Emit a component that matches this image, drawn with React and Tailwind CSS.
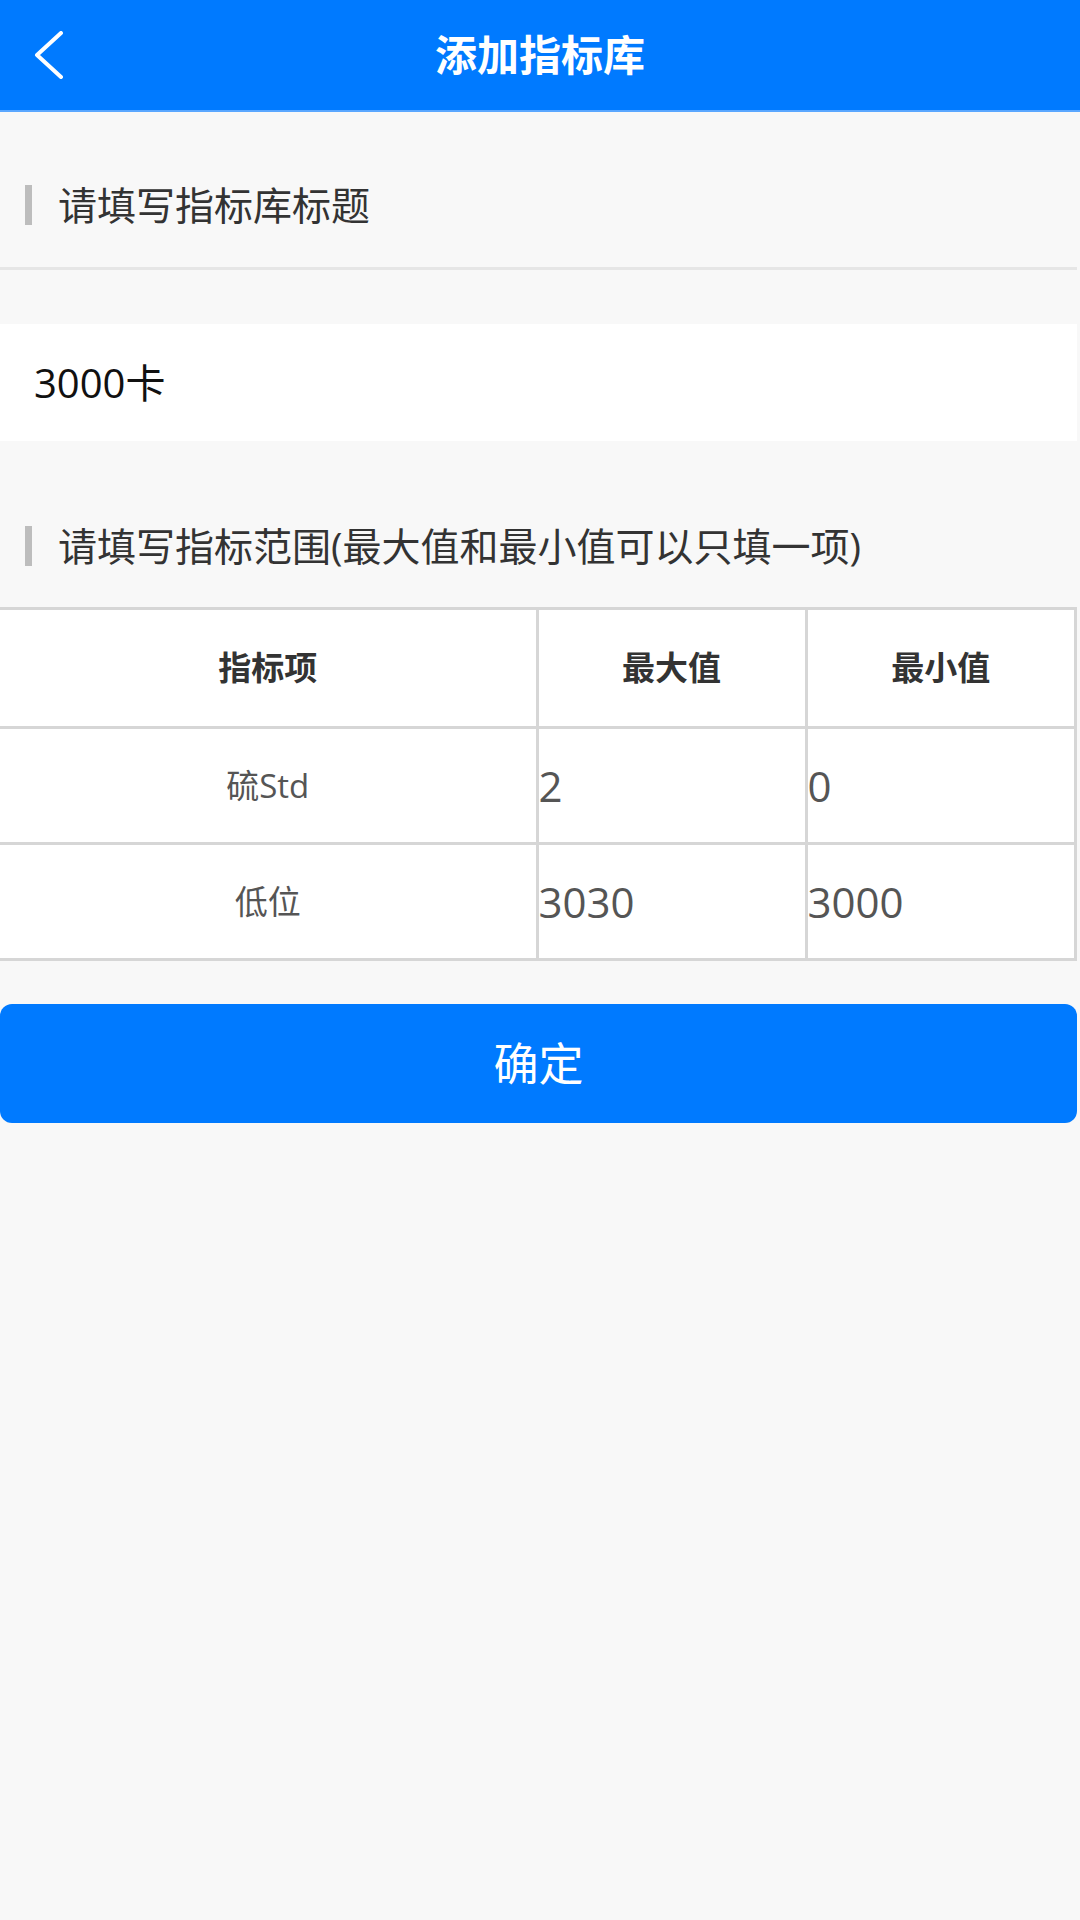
const font = { fontFamily: '"Open Sans", "Noto Sans CJK SC", sans-serif' };

const rows = [
  { name: "硫Std", max: "2", min: "0" },
  { name: "低位", max: "3030", min: "3000" },
];

const SectionLabel = ({ children }) => (
  <div className="flex items-center gap-[26px] pl-[25px]">
    <span className="block w-[7px] h-[40px] bg-[#bdbdbd]" />
    <span className="text-[39px] leading-[40px] text-[#333]">{children}</span>
  </div>
);

const App = () => {
  return (
    <div className="w-[1080px] min-h-[1920px] bg-[#f8f8f8]" style={font}>
      <header className="grid grid-cols-[1fr_auto_1fr] items-center h-[112px] bg-[#007aff] border-b-2 border-[#5aa7ff]">
        <button className="pl-[33px] h-full flex items-center">
          <svg width="32" height="48" viewBox="0 0 32 48" fill="none">
            <polyline
              points="28,2 4,24 28,46"
              stroke="white"
              strokeWidth="4"
              strokeLinecap="round"
              strokeLinejoin="round"
            />
          </svg>
        </button>
        <h1 className="text-[42px] font-bold text-white leading-none">添加指标库</h1>
        <div />
      </header>

      <div className="w-[1077px]">
        <div className="pt-[73px] pb-[42px] border-b-[3px] border-[#e6e6e6]">
          <SectionLabel>请填写指标库标题</SectionLabel>
        </div>

        <div className="mt-[54px] h-[117px] bg-white flex items-center px-[34px]">
          <span className="text-[40px] text-[#111]">3000卡</span>
        </div>

        <div className="pt-[85px] pb-[41px]">
          <SectionLabel>请填写指标范围(最大值和最小值可以只填一项)</SectionLabel>
        </div>

        <table className="w-full bg-white border-collapse border-[3px] border-[#d6d6d6] border-l-0">
          <thead>
            <tr className="h-[119px]">
              <th className="w-[537px] border-[3px] border-[#d6d6d6] border-l-0 text-[33px] font-bold text-[#333]">指标项</th>
              <th className="w-[269px] border-[3px] border-[#d6d6d6] text-[33px] font-bold text-[#333]">最大值</th>
              <th className="border-[3px] border-[#d6d6d6] text-[33px] font-bold text-[#333]">最小值</th>
            </tr>
          </thead>
          <tbody>
            {rows.map((r) => (
              <tr key={r.name} className="h-[116px]">
                <td className="border-[3px] border-[#d6d6d6] border-l-0 text-center text-[33px] text-[#555]">{r.name}</td>
                <td className="border-[3px] border-[#d6d6d6] text-left text-[42px] text-[#555] leading-none">{r.max}</td>
                <td className="border-[3px] border-[#d6d6d6] text-left text-[42px] text-[#555] leading-none">{r.min}</td>
              </tr>
            ))}
          </tbody>
        </table>

        <button className="mt-[43px] w-full h-[119px] rounded-[12px] bg-[#007aff] text-white text-[45px]">
          确定
        </button>
      </div>
    </div>
  );
};

export default App;
